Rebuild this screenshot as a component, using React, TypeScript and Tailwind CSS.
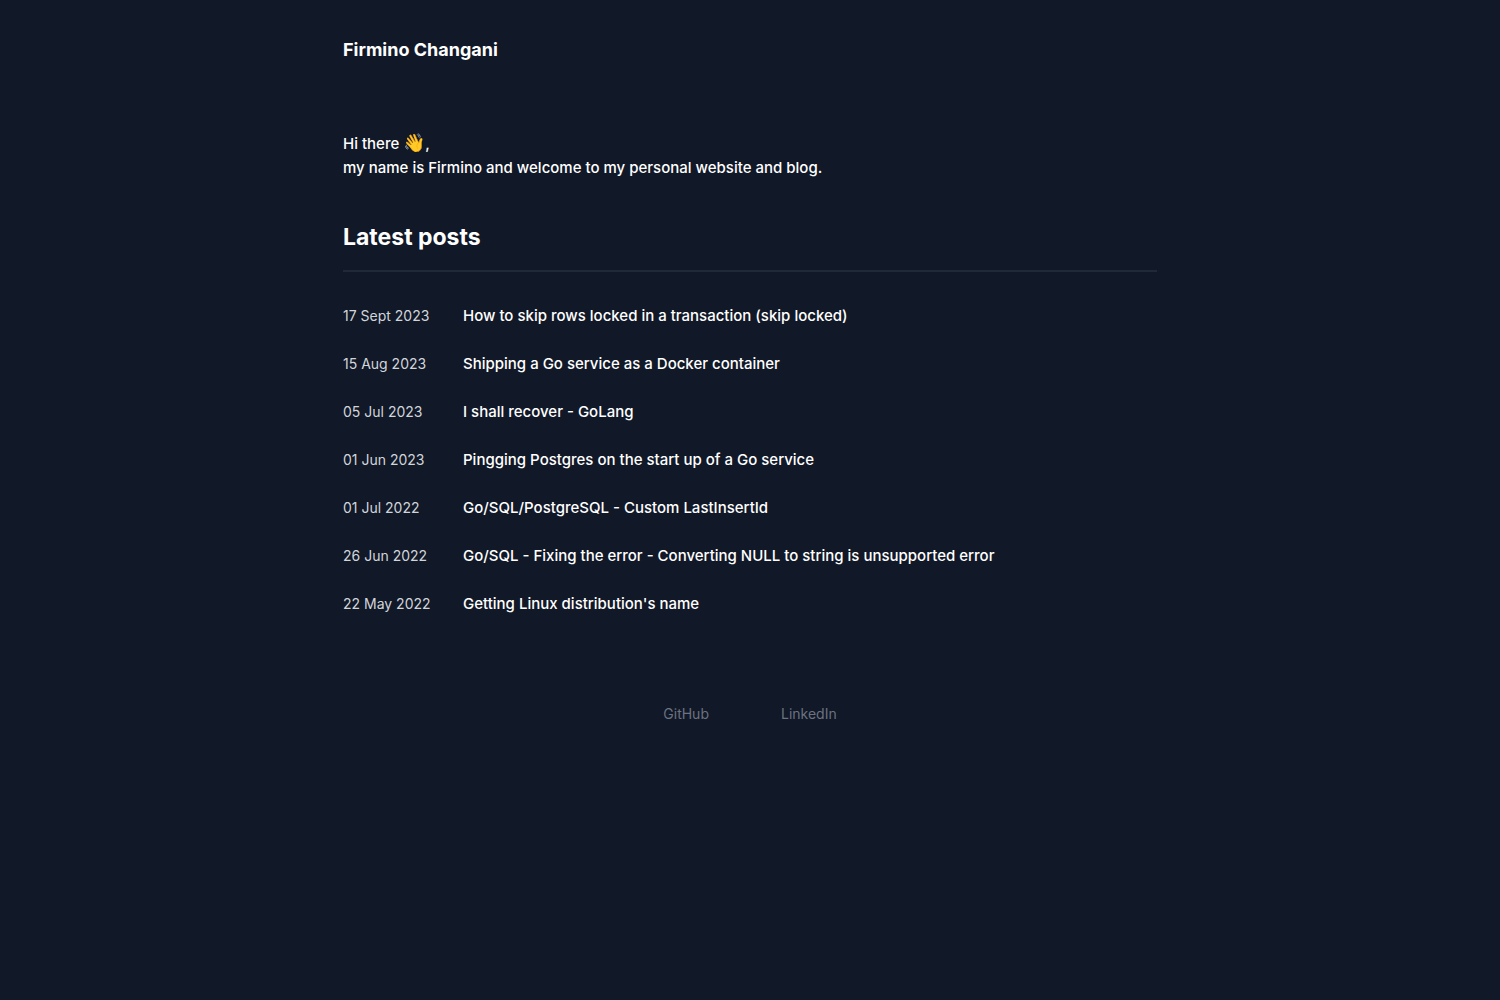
const posts = [
  { date: "17 Sept 2023", title: "How to skip rows locked in a transaction (skip locked)" },
  { date: "15 Aug 2023", title: "Shipping a Go service as a Docker container" },
  { date: "05 Jul 2023", title: "I shall recover - GoLang" },
  { date: "01 Jun 2023", title: "Pingging Postgres on the start up of a Go service" },
  { date: "01 Jul 2022", title: "Go/SQL/PostgreSQL - Custom LastInsertId" },
  { date: "26 Jun 2022", title: "Go/SQL - Fixing the error - Converting NULL to string is unsupported error" },
  { date: "22 May 2022", title: "Getting Linux distribution's name" },
];

export default function App() {
  return (
    <div className="min-h-screen bg-[#111827] font-[Inter,sans-serif] text-[15px] leading-6 font-medium text-white antialiased">
      <div className="mx-auto max-w-[862px] px-6">
        <header className="pt-9">
          <a href="#" className="block text-lg leading-7 font-bold">Firmino Changani</a>
        </header>
        <main className="pt-17">
          <p>
            Hi there <span className="text-[18px] leading-none">👋</span>,
            <br />
            my name is Firmino and welcome to my personal website and blog.
          </p>
          <h2 className="mt-10 border-b-2 border-[#1f2937] pb-4 text-[23px] leading-[34px] font-bold">Latest posts</h2>
          <ul className="mt-8 flex flex-col gap-6">
            {posts.map((p) => (
              <li key={p.title} className="flex items-center">
                <time className="w-30 shrink-0 text-sm leading-6 font-normal text-[#d1d5db]">{p.date}</time>
                <a href="#">{p.title}</a>
              </li>
            ))}
          </ul>
        </main>
        <footer className="mt-22 flex justify-center gap-18 pb-8 text-sm font-normal text-[#6b7280]">
          <a href="#">GitHub</a>
          <a href="#">LinkedIn</a>
        </footer>
      </div>
    </div>
  );
}
